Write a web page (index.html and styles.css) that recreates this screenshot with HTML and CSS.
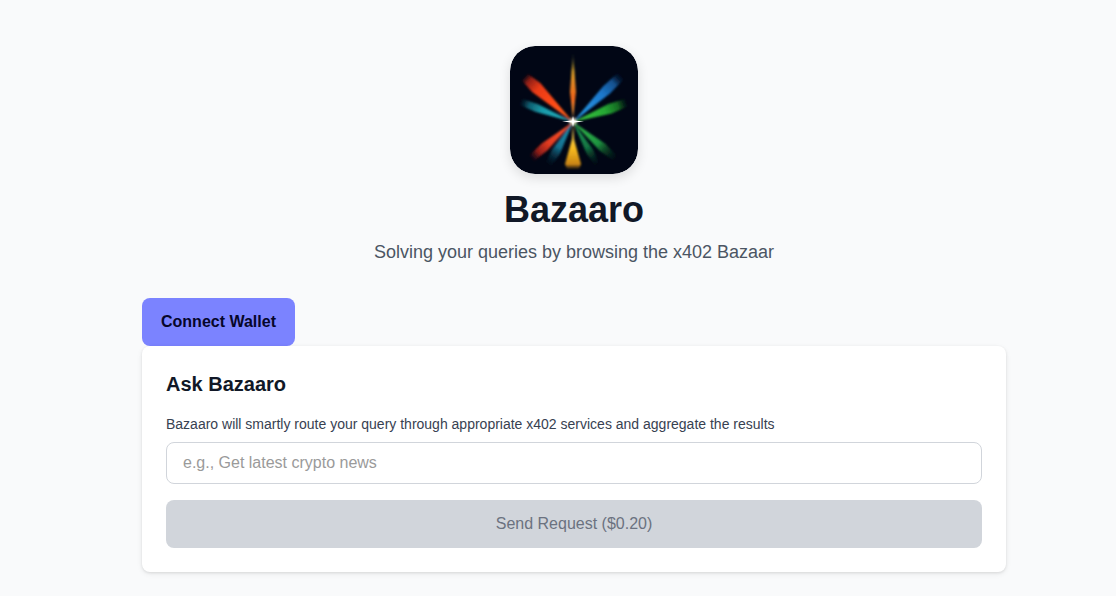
FILE: index.html
```html
<!DOCTYPE html>
<html lang="en">
<head>
<meta charset="utf-8">
<title>Bazaaro</title>
<link rel="stylesheet" href="styles.css">
</head>
<body>
<main class="page">
  <header class="hero">
    <svg class="logo" width="128" height="128" viewBox="0 0 128 128" aria-label="Bazaaro logo">
      <defs>
        <filter id="soft" x="-30%" y="-30%" width="160%" height="160%"><feGaussianBlur stdDeviation="0.8"/></filter>
        <filter id="glow" x="-100%" y="-100%" width="300%" height="300%"><feGaussianBlur stdDeviation="1.5"/></filter>
        <linearGradient id="gRed" gradientUnits="userSpaceOnUse" x1="63" y1="76" x2="14" y2="30"><stop offset="0" stop-color="#ff6a1e"/><stop offset=".4" stop-color="#ff4a12"/><stop offset=".72" stop-color="#e83a14"/><stop offset=".9" stop-color="#8e1e14"/><stop offset="1" stop-color="#3a0c10" stop-opacity=".2"/></linearGradient>
        <linearGradient id="gBlue" gradientUnits="userSpaceOnUse" x1="63" y1="76" x2="111" y2="30"><stop offset="0" stop-color="#2aa0ea"/><stop offset=".6" stop-color="#1c78cc"/><stop offset=".85" stop-color="#124f8c"/><stop offset="1" stop-color="#061a38" stop-opacity=".2"/></linearGradient>
        <linearGradient id="gTeal" gradientUnits="userSpaceOnUse" x1="63" y1="76" x2="11" y2="56"><stop offset="0" stop-color="#2ab4c4"/><stop offset=".6" stop-color="#189aa8"/><stop offset=".85" stop-color="#0e5a6c"/><stop offset="1" stop-color="#062c3c" stop-opacity=".2"/></linearGradient>
        <linearGradient id="gGreen" gradientUnits="userSpaceOnUse" x1="63" y1="76" x2="116" y2="57"><stop offset="0" stop-color="#3cc840"/><stop offset=".6" stop-color="#26a834"/><stop offset=".85" stop-color="#146a22"/><stop offset="1" stop-color="#083a18" stop-opacity=".2"/></linearGradient>
        <linearGradient id="gTop" gradientUnits="userSpaceOnUse" x1="63" y1="72" x2="63" y2="5"><stop offset="0" stop-color="#f0a840"/><stop offset=".3" stop-color="#f0661a"/><stop offset=".7" stop-color="#d8a028"/><stop offset="1" stop-color="#2c4a30" stop-opacity=".2"/></linearGradient>
        <linearGradient id="gRed2" gradientUnits="userSpaceOnUse" x1="63" y1="76" x2="22" y2="112"><stop offset="0" stop-color="#ff5a2a"/><stop offset=".6" stop-color="#e03a20"/><stop offset=".85" stop-color="#8a1c18"/><stop offset="1" stop-color="#4a0e14" stop-opacity=".2"/></linearGradient>
        <linearGradient id="gBlue2" gradientUnits="userSpaceOnUse" x1="63" y1="76" x2="39" y2="118"><stop offset="0" stop-color="#1c98b8"/><stop offset=".6" stop-color="#14708e"/><stop offset="1" stop-color="#062030" stop-opacity=".15"/></linearGradient>
        <linearGradient id="gYellow" gradientUnits="userSpaceOnUse" x1="63" y1="78" x2="63" y2="124"><stop offset="0" stop-color="#f8d868"/><stop offset=".55" stop-color="#f6b81e"/><stop offset=".88" stop-color="#c88414"/><stop offset="1" stop-color="#40280a" stop-opacity=".2"/></linearGradient>
        <linearGradient id="gGreen2" gradientUnits="userSpaceOnUse" x1="63" y1="76" x2="105" y2="112"><stop offset="0" stop-color="#34c04c"/><stop offset=".6" stop-color="#1e9440"/><stop offset="1" stop-color="#062a18" stop-opacity=".15"/></linearGradient>
        <linearGradient id="gGreen3" gradientUnits="userSpaceOnUse" x1="63" y1="76" x2="87" y2="118"><stop offset="0" stop-color="#1ea058"/><stop offset=".6" stop-color="#127442"/><stop offset="1" stop-color="#062018" stop-opacity=".15"/></linearGradient>
      </defs>
      <rect width="128" height="128" rx="25" fill="#010615"/>
      <g filter="url(#soft)">
        <polygon points="63,76 30.300,37.100 18,28 12,34.500 22.100,45.900" fill="url(#gRed)"/>
        <polygon points="63,76 100,47.400 114,33 108,26.800 93.200,40.200" fill="url(#gBlue)"/>
        <polygon points="63,76 28.100,58.300 12,52.800 10,58.900 25.100,65.700" fill="url(#gTeal)"/>
        <polygon points="63,76 101.800,67.400 117.400,60.500 114.600,53 98.400,58" fill="url(#gGreen)"/>
        <polygon points="63,72 60,46 63,6 66,46" fill="url(#gTop)"/>
        <polygon points="63,76 37.300,104.600 24,115 19.500,109.500 31.300,97.800" fill="url(#gRed2)"/>
        <polygon points="63,76 50.100,107.600 41.500,120 36,116.500 42.300,103.200" fill="url(#gBlue2)"/>
        <polygon points="63,78 62,93 55,118 57,123 69,123 71,118 64,93" fill="url(#gYellow)"/>
        <polygon points="63,76 95.300,97.800 107,110 103,114.500 89.500,104.600" fill="url(#gGreen2)"/>
        <polygon points="63,76 83,103.400 89,117 85,119.500 76.600,107.400" fill="url(#gGreen3)"/>
      </g>
      <circle cx="63" cy="75.5" r="3.500" fill="#fff6d8" filter="url(#glow)"/>
      <polygon points="63,70 64,74.500 74,75.500 64,76.500 63,81 62,76.500 52,75.500 62,74.500" fill="#fff"/>
    </svg>
    <h1 class="title">Bazaaro</h1>
    <p class="subtitle">Solving your queries by browsing the x402 Bazaar</p>
  </header>
  <section class="panel-wrap">
    <button class="connect" type="button">Connect Wallet</button>
    <div class="card">
      <h2 class="card-title">Ask Bazaaro</h2>
      <label class="hint" for="query">Bazaaro will smartly route your query through appropriate x402 services and aggregate the results</label>
      <input class="query" id="query" type="text" placeholder="e.g., Get latest crypto news">
      <button class="send" type="button" disabled>Send Request ($0.20)</button>
    </div>
  </section>
</main>
</body>
</html>
```
FILE: styles.css
```css
* { box-sizing: border-box; }
html, body { margin: 0; height: 100%; }
body {
  background: #f9fafb;
  color: #111827;
  font-family: "Liberation Sans", Arial, sans-serif;
  overflow: hidden;
}
.page {
  width: 864px;
  margin-left: 142px;
  padding-top: 46px;
}
.hero {
  display: flex;
  flex-direction: column;
  align-items: center;
}
.logo {
  display: block;
  border-radius: 25px;
  box-shadow: 0 4px 12px rgba(0, 0, 0, 0.12);
}
.title {
  margin: 16px 0 0;
  font-size: 36px;
  line-height: 40px;
  font-weight: 700;
  color: #111827;
}
.subtitle {
  margin: 8px 0 0;
  font-size: 18px;
  line-height: 28px;
  color: #4b5563;
}
.panel-wrap {
  margin-top: 32px;
  display: flex;
  flex-direction: column;
  align-items: flex-start;
}
.connect {
  width: 153px;
  height: 48px;
  border: 0;
  border-radius: 8px;
  background: #7b83ff;
  color: #06062a;
  font: 700 16px "Liberation Sans", Arial, sans-serif;
}
.card {
  width: 100%;
  background: #fff;
  border-radius: 8px;
  box-shadow: 0 1px 3px rgba(0, 0, 0, 0.1), 0 2px 6px rgba(0, 0, 0, 0.06);
  padding: 24px;
}
.card-title {
  margin: 0;
  font-size: 20px;
  line-height: 28px;
  font-weight: 700;
  color: #111827;
}
.hint {
  display: block;
  margin-top: 16px;
  font-size: 14px;
  line-height: 20px;
  color: #374151;
}
.query {
  display: block;
  width: 100%;
  height: 42px;
  margin-top: 8px;
  padding: 0 16px;
  border: 1px solid #d1d5db;
  border-radius: 8px;
  background: #fff;
  font: 16px "Liberation Sans", Arial, sans-serif;
  outline: none;
}
.query::placeholder { color: #9a9a9a; opacity: 1; }
.send {
  display: block;
  width: 100%;
  height: 48px;
  margin-top: 16px;
  border: 0;
  border-radius: 8px;
  background: #d1d5db;
  color: #6b7280;
  font: 16px "Liberation Sans", Arial, sans-serif;
}
```
